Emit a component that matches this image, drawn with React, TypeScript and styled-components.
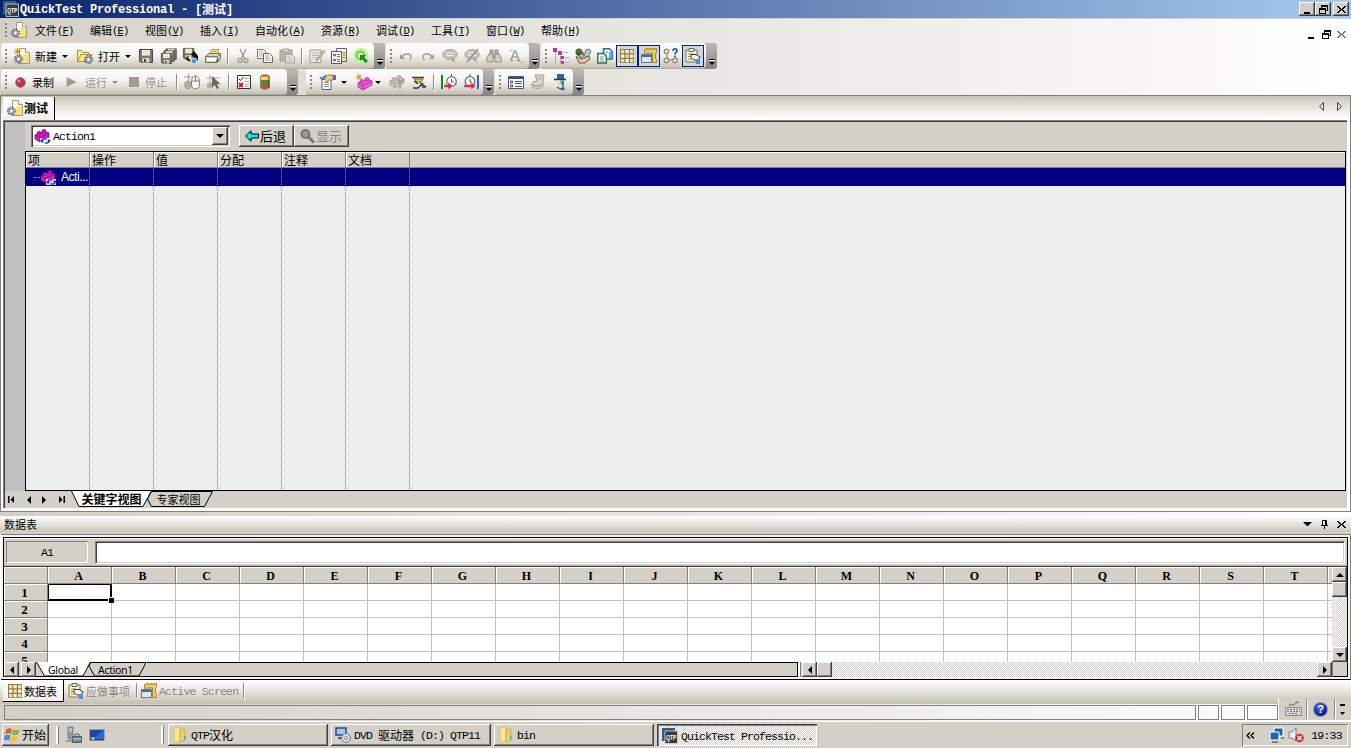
import React from 'react';
import styled, { createGlobalStyle, css } from 'styled-components';

const FACE = '#d4d0c8';
const CJK = '"Noto Sans CJK SC", sans-serif';

const Global = createGlobalStyle`
  * { box-sizing: border-box; }
  html, body { margin: 0; padding: 0; overflow: hidden; background: ${FACE}; }
  svg { display: block; flex: none; }
`;

const raised = css`
  background: ${FACE};
  box-shadow: inset -1px -1px 0 #404040, inset 1px 1px 0 #fff, inset -2px -2px 0 #808080;
`;
const checker = css`
  background: repeating-conic-gradient(#fff 0 25%, ${FACE} 0 50%) 0 0 / 2px 2px;
`;

/* ---------- text ---------- */
const Run = styled.span<{ $size: number; $bold?: boolean; $color?: string }>`
  display: inline-flex;
  align-items: center;
  flex: none;
  white-space: pre;
  height: 14px;
  line-height: 14px;
  font-family: ${CJK};
  font-size: ${p => p.$size}px;
  font-weight: ${p => (p.$bold ? 700 : 400)};
  color: ${p => p.$color || '#000'};
`;
const Latin = styled.span<{ $adv: number; $fs: number }>`
  margin-top: 2px;
  font-family: "Liberation Mono", monospace;
  font-size: ${p => p.$fs}px;
  letter-spacing: ${p => p.$adv - p.$fs * 0.6001}px;
  u { text-decoration: underline; text-underline-offset: 1px; }
`;

type TextProps = { children: string; size?: number; adv?: number; fs?: number; bold?: boolean; color?: string; accel?: string };
function Text({ children, size = 12, adv, fs, bold, color, accel }: TextProps) {
  const parts = children.match(/[\x00-\xff]+|[^\x00-\xff]+/g) || [];
  const a = adv ?? size / 2;
  const f = fs ?? size - 0.5;
  return (
    <Run $size={size} $bold={bold} $color={color}>
      {parts.map((t, i) =>
        /[\x00-\xff]/.test(t) ? <Latin key={i} $adv={a} $fs={f}>{t}</Latin> : <span key={i}>{t}</span>
      )}
      {accel && <Latin $adv={a} $fs={f}>(<u>{accel}</u>)</Latin>}
    </Run>
  );
}

/* ---------- icons ---------- */
const Svg = ({ w = 16, h = 16, children }: { w?: number; h?: number; children: React.ReactNode }) => (
  <svg width={w} height={h} viewBox={`0 0 ${w} ${h}`} fill="none" overflow="visible">{children}</svg>
);
const GREY = '#a39b91';

const Gear = ({ x, y }: { x: number; y: number }) => (
  <g transform={`translate(${x} ${y})`}>
    <circle cx="4.5" cy="4.5" r="3.8" stroke="#5a6380" strokeWidth="1.6" strokeDasharray="1.5 1.1" />
    <circle cx="4.5" cy="4.5" r="2.6" fill="#c9d1e4" stroke="#66708f" />
    <circle cx="4.5" cy="4.5" r="1" fill="#fff" />
  </g>
);
const TestIcon = ({ star }: { star?: boolean }) => (
  <Svg>
    <path d="M5.500 .5h6l4 4v11h-10z" fill="#fffbe0" stroke="#a09a80" />
    <path d="M10 6h5v9H8z" fill="#f6d860" opacity=".8" />
    <path d="M11.500 .5v4h4" fill="#fff" stroke="#a09a80" />
    {star && <path d="M3.500 0v7M0 3.500h7M1 1l5 5M6 1l-5 5" stroke="#f28c10" />}
    <Gear x={0} y={6.500} />
  </Svg>
);
const OpenIcon = () => (
  <Svg>
    <path d="M.5 13V2.500h4l1 2h6V7" fill="#fff3a8" stroke="#b08c20" />
    <path d="M.5 13.500L4 6.500h11l-3 7z" fill="#ffe680" stroke="#b08c20" />
    <Gear x={7} y={7} />
  </Svg>
);
const disk = (x: number, y: number, s: number) => (
  <g transform={`translate(${x} ${y}) scale(${s})`}>
    <path d="M.5.5h13v13H2l-1.500-1.500z" fill="#77776a" stroke="#46463c" />
    <path d="M3 1h8v5.500H3z" fill="#fff" />
    <path d="M4 2.500h6M4 4.500h6" stroke="#d8d080" />
    <path d="M3.500 9h7v4.500h-7z" fill="#d8d8d0" />
    <path d="M5 10h2v3H5z" fill="#46463c" />
  </g>
);
const SaveIcon = () => <Svg>{disk(1, 1, 1)}</Svg>;
const SaveAllIcon = () => <Svg>{disk(4.5, 0.5, .8)}{disk(2.5, 2.500, .8)}{disk(0, 5, .78)}</Svg>;
const SaveResIcon = () => (
  <Svg>{disk(0, 0, .8)}
    <path d="M8 6l3-3 4 5v5l-4-3z" fill="#1a1a1a" /><path d="M3 10l4 3M11 5l3 4" stroke="#111" strokeWidth="2" />
    <path d="M6 9l3 2" stroke="#ffe060" strokeWidth="2" /><circle cx="11" cy="13" r="3" fill="#4f9bdc" stroke="#cfe6ff" />
  </Svg>
);
const PrintIcon = () => (
  <Svg>
    <path d="M4.500 7L7 1.500h7L12 7z" fill="#fff27a" stroke="#9a9a60" /><path d="M7.500 3.500h4M7 5.500h4" stroke="#b8a830" />
    <path d="M.5 8.500L4 5.500h11.500v5l-3 4H.5z" fill="#d4d5c8" stroke="#707060" />
    <path d="M1 8.500h11.500l3-2.500M12.500 9v5" stroke="#777" /><path d="M2 11.500h9" stroke="#fff" strokeWidth="3" /><path d="M11 14l3-3" stroke="#3a9a40" strokeWidth="1.800" />
  </Svg>
);
const CutIcon = () => (
  <Svg>
    <path d="M5 1l4.500 9.500M11 1L6.500 10.500" stroke={GREY} strokeWidth="1.400" />
    <circle cx="5" cy="12.500" r="2" stroke={GREY} strokeWidth="1.300" /><circle cx="11" cy="12.500" r="2" stroke={GREY} strokeWidth="1.300" />
  </Svg>
);
const CopyIcon = () => (
  <Svg>
    <path d="M.5 1.500h6l2 2v7h-8z" fill="#fff" stroke="#77736a" /><path d="M2 4h4M2 6h4M2 8h4" stroke="#aaa59c" />
    <path d="M6.500 5.500h6l3 3v6h-9z" fill="#fff" stroke="#66645c" /><path d="M8 8h4M8 10h6M8 12h6" stroke="#8b98a8" /><path d="M11 9h4v5h-3z" fill="#f6e48a" opacity=".6" />
  </Svg>
);
const PasteIcon = () => (
  <Svg>
    <path d="M1 2h12v11H1z" fill="#bdb5aa" stroke={GREY} /><path d="M4 1h6v3H4z" fill="#ddd7cf" stroke={GREY} />
    <path d="M6.500 6.500h6l3 3v5.500h-9z" fill="#eeeae6" stroke={GREY} /><path d="M8 9h4M8 11h6M8 13h6" stroke="#bdb5aa" />
  </Svg>
);
const EditIcon = () => (
  <Svg>
    <path d="M1 2h11v12.500H1z" fill="#ece8e4" stroke={GREY} /><path d="M3 5h7M3 7.500h6M3 10h4" stroke="#b9b1a7" />
    <path d="M14.500 2L8 10l-1 3 2.500-1.500L16 3.500z" fill="#c7bfb4" stroke={GREY} />
  </Svg>
);
const SheetsIcon = () => (
  <Svg>
    <path d="M5.500 .5h10v13h-10z" fill="#fff" stroke="#66665c" /><path d="M10 4h5v9h-5z" fill="#f8e48a" />
    <path d="M.5 3.500h10v12H.5z" fill="#fff" stroke="#55554c" />
    <path d="M2 7h3M2 12h3" stroke="#6a7a98" strokeWidth="2.500" /><path d="M6 6.500h3M6 8.500h3M6 11.500h3M6 13.500h3M12 4.500h2M12 7h2M12 9.500h2" stroke="#70706a" />
  </Svg>
);
const QcIcon = () => (
  <Svg>
    <circle cx="8" cy="8" r="6.800" fill="#f2ffd8" stroke="#b6f48c" strokeWidth="1.800" />
    <circle cx="7.500" cy="7.500" r="4" stroke="#5ccc3a" strokeWidth="2" /><circle cx="7.500" cy="7.500" r="1.500" fill="#f5f04a" />
    <path d="M7 7h6l-2 2 4 4-2.200 2.200-4-4-1.800 2z" fill="#14931c" />
  </Svg>
);
const UndoIcon = ({ flip }: { flip?: boolean }) => (
  <Svg><g transform={flip ? 'translate(16 0) scale(-1 1)' : undefined}>
    <path d="M2 6v5h5z" fill={GREY} /><path d="M4 9c2-4 9-4 9 0 0 1-.5 2-1.500 3" stroke={GREY} strokeWidth="1.300" />
  </g></Svg>
);
const CommentIcon = ({ cross }: { cross?: boolean }) => (
  <Svg>
    <ellipse cx="8" cy="6.500" rx="7.300" ry="5" fill="#c8c0b7" stroke="#b3aaa0" /><path d="M8 11l5 4-1-5z" fill="#aaa196" />
    <path d="M4 5h8M4 7.500h8" stroke="#f3efeb" />{cross && <path d="M14 1L3 14" stroke="#958d83" strokeWidth="1.600" />}
  </Svg>
);
const BinocIcon = () => (
  <Svg>
    <path d="M4 2h3v4H4zM9 2h3v4H9z" fill="#bdb5ab" stroke="#968e84" /><path d="M3 6h4l0 8H.800V10zM13 6H9v8h6.200V10z" fill="#d5cec6" stroke="#968e84" /><path d="M7 7h2v3H7z" fill="#968e84" />
  </Svg>
);
const ReplaceIcon = () => (
  <Svg>
    <path d="M3 12L6.500 3h1L11 12M4.500 9h5M2 12.500h3M9 12.500h3" stroke="#948c82" strokeWidth="1.200" />
    <path d="M1 4l2-2 2 0M11 13l3 2 2-2" stroke="#b5ada3" />
  </Svg>
);
const TreeIcon = () => (
  <Svg>
    <path d="M2.500 4v11M5 3.500h1M7.500 6v9M7.500 9.500h2M7.500 14.500h2" stroke="#707c88" strokeDasharray="1 1" /><path d="M0 0h4v4H0zM5 3h4v4H5zM8 8h3v3H8zM8 13h3v3H8z" fill="#b8389c" />
    <path d="M10 4.500h5M12 9.500h4M12 14.500h4" stroke="#b0b6b8" />
  </Svg>
);
const HandIcon = () => (
  <Svg>
    <circle cx="4" cy="4" r="3.500" fill="#386c30" /><circle cx="5" cy="3" r="1.300" fill="#e04030" /><path d="M9 7l2-5 3-1 2 2-4 8z" fill="#a5cbee" stroke="#5a7aa0" /><path d="M12 3l2 2" stroke="#f0d040" strokeWidth="1.500" />
    <path d="M1 8l5 3 8-3 1 3-5 4H4z" fill="#e2c2a0" stroke="#6c5544" /><path d="M2 6l5 4M8 4v5" stroke="#222" />
  </Svg>
);
const PagesIcon = () => (
  <Svg>
    <path d="M6.500 .800h6l2.700 2.700v7.500H6.500z" fill="#fff" stroke="#246cb4" strokeWidth="1.500" /><path d="M12 4h3v6h-3z" fill="#6aa9e4" /><path d="M8 4h3" stroke="#4f93d6" />
    <path d="M.800 5.500h6l2.500 2.500v7H.800z" fill="#fff" stroke="#27794a" strokeWidth="1.500" /><path d="M3 9h4M3 11h4M3 13h4" stroke="#57a878" />
  </Svg>
);
const GridIcon = () => (
  <Svg>
    <path d="M1 1h14v14H1z" fill="#7d7d70" />
    {[0, 1, 2].map(r => [0, 1, 2].map(c => <rect key={`${r}${c}`} x={2 + c * 4.500} y={2 + r * 4.500} width="3.300" height="3.300" fill={(r + c) % 2 ? '#fff6c8' : '#ffe06a'} />))}
  </Svg>
);
const ScreenIcon = () => (
  <Svg>
    <path d="M3.500 1.500h2v-1h2v1h2v-1h2v1h2v-1h2v4l-1 1v5l1 1v3h-4V5H5.500v2h-2z" fill="#f5d04a" stroke="#8a7030" strokeWidth=".8" />
    <path d="M.5 6.500h10v8H.5z" fill="#dfe6f0" stroke="#6a7890" /><path d="M1 7h9v2H1z" fill="#3f6cac" />
  </Svg>
);
const NodesIcon = () => (
  <Svg>
    <path d="M4 4v8h8V9" stroke="#7d7d6d" />{[[3.500, 3.500], [3.500, 12.500], [12, 12.500]].map(([x, y]) => <circle key={`${x}-${y}`} cx={x} cy={y} r="2.400" fill="#e0e0ce" stroke="#6d6d5a" />)}
    <path d="M10 3c0-3 4-3 4 0 0 1.500-2 1.500-2 3.500M12 7.500v1.500" stroke="#1c5d9e" strokeWidth="1.700" />
  </Svg>
);
const TodoIcon = () => (
  <Svg>
    <path d="M1 2h11v12H1z" fill="#fff8b8" stroke="#77705a" /><path d="M4 .5h5v3H4z" fill="#eee" stroke="#666" /><path d="M3 6h5M3 8.500h3M3 11h4" stroke="#8a866c" />
    <path d="M6 6.500h5l4 2.500-2 3H9L6 9.500z" fill="#fff" stroke="#333" /><path d="M11 11.500h4v4.500h-4z" fill="#4a90dc" />
  </Svg>
);
const RecordIcon = () => <Svg w={11} h={11}><circle cx="5.500" cy="5.500" r="4.700" fill="#c63550" stroke="#8b4856" /><circle cx="4" cy="4" r="1.500" fill="#e58a94" /></Svg>;
const PlayIcon = () => <Svg w={11} h={10}><path d="M.5 0L10.500 5 .5 10z" fill={GREY} /></Svg>;
const StopIcon = () => <Svg w={10} h={10}><path d="M0 0h10v10H0z" fill={GREY} /></Svg>;
const MouseIcon = () => (
  <Svg>
    <path d="M0 3h9M4.500 0v9" stroke="#a8a097" strokeWidth="1.200" /><ellipse cx="4" cy="11" rx="3.500" ry="4" fill="#b5ada3" stroke="#a8a097" />
    <path d="M7.500 8c0-8 8-8 8 0v3c0 5-8 5-8 0z" fill="#f6f4f1" stroke="#857d74" /><path d="M7.500 7h8M11.500 2v5" stroke="#857d74" />
  </Svg>
);
const PointerIcon = () => (
  <Svg>
    <path d="M0 4h14M4 1v9" stroke="#b4ada4" strokeWidth="1.200" /><ellipse cx="4" cy="11.500" rx="3.200" ry="3" fill="#b5ada3" />
    <path d="M6 2l8.500 8H11l2 4-2.200 1-2-4L6 13.500z" fill="#6f6760" />
  </Svg>
);
const CheckListIcon = () => (
  <Svg>
    <path d="M1.500 1.500h13v13h-13z" fill="#fff" stroke="#333" /><path d="M3 5l1.500 1.500L7.500 3" stroke="#222" /><path d="M3 9l4 4M7 9l-4 4" stroke="#d01030" strokeWidth="1.800" />
    <path d="M9.500 4.500h4M9.500 7.500h4M9.500 10.500h4M9.500 12.500h4" stroke="#555" strokeDasharray="1 1" />
  </Svg>
);
const LightIcon = () => (
  <Svg>
    <path d="M3.500 3c0-3 9-3 9 0v10c0 3-9 3-9 0z" fill="#c84848" stroke="#857850" strokeWidth=".8" /><path d="M4 2.500h8V6H4z" fill="#f0dc50" /><path d="M4 7h8v3.500H4z" fill="#20a838" /><path d="M10.500 2h2v12h-2z" fill="#502020" opacity=".3" />
  </Svg>
);
const StepIcon = () => (
  <Svg>
    <path d="M2 5.500h9v10H2z" fill="#fff" stroke="#55606c" /><path d="M4 8.500h5M4 10.500h5M4 12.500h5" stroke="#7d8a98" /><path d="M0 3l2 2 4-4" stroke="#2a72c0" strokeWidth="1.600" />
    <path d="M5 4l3-3h5v5H9l-2 2-2-2z" fill="#f3cf78" stroke="#94652a" strokeWidth=".8" /><path d="M13 1h3v5h-3z" fill="#3f74c0" />
  </Svg>
);
const BrickIcon = ({ grey, star, cycle }: { grey?: boolean; star?: boolean; cycle?: boolean }) => {
  const f = grey ? '#cdc5bb' : star ? '#ec5cd8' : '#dc1cc0';
  const d = grey ? '#9d958b' : star ? '#a02c90' : '#760a68';
  return (
    <Svg>
      {star && <path d="M3 0v6M0 3h6M1 1l4 4M5 1L1 5" stroke="#f08c10" />}
      <g transform={star ? 'translate(1 2)' : undefined}>
        <path d="M1 7l9-4 5 2v4l-9 5-5-3z" fill={f} stroke={d} strokeWidth=".8" /><path d="M1 7l5 2.500 9-4.500M6 9.500V14" stroke={d} strokeWidth=".8" />
        <ellipse cx="5" cy="5" rx="2" ry="1.500" fill={f} stroke={d} strokeWidth=".8" /><ellipse cx="10" cy="3" rx="2" ry="1.500" fill={f} stroke={d} strokeWidth=".8" />
      </g>
      {grey && <path d="M9 5l2 4 4-4M11 9v6" stroke={d} strokeWidth="1.500" />}
      {cycle && <g><path d="M6 10h10v6H6z" fill="#fff" opacity=".85" /><path d="M8 14v-1.500c0-2 3-2.500 4.500-1M15 12v1c0 2.500-3 2.500-4.500 1.500" stroke="#1226e0" strokeWidth="1.400" /><path d="M5.800 12.500h4.400L8 15zM12.800 13.500h4.200l-2-2.500z" fill="#1226e0" /></g>}
    </Svg>
  );
};
const TableFnIcon = () => <Svg><path d="M1 3.500h12M2 14h5l5-5M3 7l4 3M9 9l6 4M11 13h4" stroke="#3d3d34" strokeWidth="1.400" /><path d="M3 5h9l-2 3H6z" fill="#f2d14c" stroke="#4a4a3c" strokeWidth=".8" /></Svg>;
const TimerIcon = ({ end }: { end?: boolean }) => (
  <Svg>
    {end ? <path d="M14 1h2v14h-2z" fill="#2a62cc" /> : <path d="M0 1h2v14H0z" fill="#128a12" />}
    <circle cx={end ? 7 : 10.500} cy="7.500" r="4.800" fill="#fff" stroke="#6e6e6e" strokeWidth="1.300" /><path d={end ? 'M7 0v2M7 5v3h2' : 'M10.500 0v2M10.500 5v3h2'} stroke="#444" />
    <path d={end ? 'M1 10.500h7v-2.500l5 4-5 4v-2.500H1z' : 'M3 10.500h4v-2.500l5 4-5 4v-2.500H3z'} fill="#d22c48" stroke="#fff" strokeWidth=".4" />
  </Svg>
);
const FormIcon = () => (
  <Svg><path d="M.5 2.500h15v12H.5z" fill="#fff" stroke="#48566c" /><path d="M1 3h14v2H1z" fill="#27508c" /><path d="M2.500 7h2v2h-2zM2.500 11h2v2h-2z" stroke="#48566c" /><path d="M7 7.500h7M7 9.500h7M7 12.500h7" stroke="#48566c" /></Svg>
);
const BooksIcon = () => <Svg><path d="M5 1h9l-1 8-5 3-6-1 1-3 4-1z" fill="#dcd5cd" stroke="#a8a096" /><path d="M1 11l7 2 6-3M1 13l7 2 6-3" stroke="#a8a096" /><path d="M6 4l6-1M6 6l6-1" stroke="#b8b0a6" /></Svg>;
const WizardIcon = () => (
  <Svg><path d="M5 0h7v5H5z" fill="#2a68a8" /><path d="M2 5.500h12" stroke="#173c70" strokeWidth="1.600" /><path d="M5 6.500h7v6H5z" fill="#f4deb0" /><path d="M8.500 6.500H12v6H9z" fill="#4d7cb8" /><path d="M4 13h8l1 3H9z" fill="#2a62b0" /><path d="M7 10h3v4H7z" fill="#f4e070" /></Svg>
);
const QtpIcon = () => (
  <Svg>
    <path d="M0 0h13v13H0z" fill="#2c6090" /><path d="M3 3h12.500v12.500H3z" fill="#3c3c3c" stroke="#ddd" strokeWidth=".8" />
    <text x="9.300" y="12" fontSize="7" fontWeight="700" textAnchor="middle" textLength="10" lengthAdjust="spacingAndGlyphs" fill="#fff" fontFamily="Liberation Sans, sans-serif">QTP</text>
  </Svg>
);
const FolderIcon = () => <Svg><path d="M2 1l6-1v14l-6 2z" fill="#f6e69a" stroke="#d8bc50" strokeWidth=".7" /><path d="M8 2h5v11l-5 2z" fill="#ecd062" stroke="#c9a53c" strokeWidth=".7" /><path d="M12 9h1.500v4H12z" fill="#4aa8e0" /></Svg>;
const DvdIcon = () => (
  <Svg><path d="M1 1h10v7H1z" fill="#9fcaf0" stroke="#2c4a78" strokeWidth="1.500" /><path d="M3 10h4v2H3z" fill="#3d5c88" /><circle cx="11" cy="11" r="4.500" fill="#d8d8dc" stroke="#77777c" /><circle cx="11" cy="11" r="1.500" fill="#fff" stroke="#888" /></Svg>
);
const FlagIcon = () => (
  <Svg><path d="M2.500 2.500c2-1.500 4-1.500 5.500-.5L6.500 7C5 6 3 6 1 7z" fill="#e8542c" /><path d="M9 2.500c2 1 4 1 6.500 0L14 7.500c-2 1-4 1-6.500 0z" fill="#86b83a" /><path d="M.8 8.500c2-1 4-1 5.500 0L5 13.500c-2-1-3.500-1-5 0z" fill="#3f8ad8" /><path d="M7.200 9c2 1 4 1 6.500 0l-1.500 5c-2 1-4.500 1-6.500 0z" fill="#f5c030" /></Svg>
);
const ServerIcon = () => <Svg><path d="M2 0h5v12H2z" fill="#8a9ba6" stroke="#63747e" strokeWidth=".7" /><path d="M3 2h3M3 4h3" stroke="#dfe8ec" /><path d="M0 13h8v2H0z" fill="#90a0a8" /><path d="M6.500 9.500h9v6h-9z" fill="#73848f" stroke="#4e5c66" /><path d="M9 9V7h4v2" stroke="#4e5c66" /><path d="M7 12h8" stroke="#cdd5d9" /></Svg>;
const DesktopIcon = () => <Svg><path d="M.5 2.500h15v10H.5z" fill="#2a6cd4" stroke="#8da4c0" /><path d="M1 3h14L6 10H1z" fill="#1b48a4" /><path d="M1 12h14v1.500H1z" fill="#27405c" /><circle cx="4" cy="11.500" r="1.500" fill="#e8c060" /></Svg>;

const Glyph = ({ kind, color = '#000' }: { kind: 'min' | 'restore' | 'close'; color?: string }) => (
  <svg width="9" height="9" viewBox="0 0 9 9" fill="none" shapeRendering="crispEdges">
    {kind === 'min' && <path d="M1 7h6v2H1z" fill={color} />}
    {kind === 'restore' && <path d="M2.500 3V.5h6v5H6M2 1.500h7M.5 3.500h5.500v5H.5zM0 4.500h6" stroke={color} />}
    {kind === 'close' && <path d="M0 1h2v1h1v1h1v1h1V3h1V2h1V1h2v1H8v1H7v1H6v1h1v1h1v1h1v1H7V7H6V6H5V5H4v1H3v1H2v1H0V7h1V6h1V5h1V4H2V3H1V2H0z" fill={color} />}
  </svg>
);
const Tri = ({ dir, color = '#000', s = 4 }: { dir: 'u' | 'd' | 'l' | 'r'; color?: string; s?: number }) => {
  const vertical = dir === 'u' || dir === 'd';
  const w = vertical ? s * 2 : s, h = vertical ? s : s * 2;
  const d = { u: `M0 ${h}h${w}L${w / 2} 0z`, d: `M0 0h${w}L${w / 2} ${h}z`, l: `M${w} 0v${h}L0 ${h / 2}z`, r: `M0 0v${h}L${w} ${h / 2}z` }[dir];
  return <svg width={w} height={h}><path d={d} fill={color} /></svg>;
};

/* ---------- top chrome ---------- */
const Desktop = styled.div`
  width: 1351px; height: 748px; display: flex; flex-direction: column; background: ${FACE}; overflow: hidden;
`;
const TitleBar = styled.header`
  height: 19px; flex: none; display: flex; align-items: center; padding: 0 2px 0 3px;
  background: linear-gradient(90deg, #0a246a, #a6caf0); border-bottom: 1px solid ${FACE};
`;
const TitleText = styled.div`display: flex; padding-left: 1px; height: 14px;`;
const Spacer = styled.div`flex: 1;`;
const CaptionButton = styled.div<{ $gap?: number }>`
  ${raised}
  width: 16px; height: 14px; margin-left: ${p => p.$gap || 0}px; display: flex; align-items: center; justify-content: center;
`;
const Chrome = styled.div`
  height: 76px; flex: none; background: linear-gradient(90deg, #d4d0c8 0, #e0ddd6 20%, #e8e7e3 52%, #f8f7f5 85%, #fff 100%);
`;
const MenuBar = styled.nav`height: 24px; display: flex; align-items: center; padding: 0 5px 2px 5px;`;
const MenuList = styled.div`display: flex; padding-left: 8px; height: 14px;`;
const MenuItem = styled.div<{ $w: number }>`width: ${p => p.$w}px; flex: none; display: flex;`;
const MdiButtons = styled.div`display: flex; gap: 6px; padding-top: 9px;`;
const Grip = styled.i<{ $ml?: number }>`
  width: 3px; height: 14px; flex: none; margin-left: ${p => p.$ml || 0}px;
  background: repeating-linear-gradient(180deg, #8c8880 0 2px, transparent 2px 4px) 0 0 / 2px 100% no-repeat;
`;
const ToolRow = styled.div`height: 26px; display: flex; padding-left: 1px;`;
const BarShell = styled.div<{ $w: number; $ml?: number }>`
  width: ${p => p.$w}px; margin-left: ${p => p.$ml || 0}px; height: 26px; flex: none; display: flex;
  border-radius: 3px; background: linear-gradient(180deg, #bcbab5, #858585);
`;
const BarBody = styled.div`
  flex: 1; min-width: 0; display: flex; align-items: center; border-radius: 3px 4px 4px 3px;
  background: linear-gradient(180deg, #fdfdfc 0, #f4f3f0 45%, #dcd8d0 75%, #c5c0b4 96%, #9c988e 100%);
`;
const BarCap = styled.div`width: 11px; display: flex; flex-direction: column; align-items: center; justify-content: flex-end; padding-bottom: 4px; gap: 1px;`;
const CapLine = styled.i`width: 6px; height: 2px; background: linear-gradient(#000 50%, #fff 50%);`;
const Slot = styled.div<{ $ml: number; $w?: number }>`
  width: ${p => p.$w || 16}px; margin-left: ${p => p.$ml}px; flex: none; display: flex; align-items: center; justify-content: center;
`;
const Pressed = styled.div<{ $ml?: number }>`
  width: 22px; height: 22px; margin-left: ${p => p.$ml || 0}px; flex: none; display: flex; align-items: center; justify-content: center;
  background: #d2d5de; border: 1px solid #0a246a;
`;
const Divider = styled.i<{ $ml: number; $h?: number; $mt?: number }>`
  width: 1px; height: ${p => p.$h || 16}px; margin: ${p => p.$mt || 0}px 0 0 ${p => p.$ml}px; flex: none; background: #8f8b83; box-shadow: 1px 1px 0 #fff;
`;
const Bar = ({ w, ml, children }: { w: number; ml?: number; children: React.ReactNode }) => (
  <BarShell $w={w} $ml={ml}>
    <BarBody><Grip $ml={4} />{children}</BarBody>
    <BarCap><CapLine /><Tri dir="d" s={3} /></BarCap>
  </BarShell>
);
const Drop = ({ ml, color }: { ml: number; color?: string }) => <Slot $ml={ml} $w={6}><Tri dir="d" s={3} color={color} /></Slot>;

const menus: [string, string, number][] = [
  ['文件', 'F', 55], ['编辑', 'E', 55], ['视图', 'V', 55], ['插入', 'I', 55], ['自动化', 'A', 66],
  ['资源', 'R', 55], ['调试', 'D', 55], ['工具', 'T', 55], ['窗口', 'W', 55], ['帮助', 'H', 55],
];

/* ---------- document ---------- */
const DocFrame = styled.section`
  height: 417px; flex: none; display: flex; flex-direction: column; background: #fff;
  border: 1px solid #808080;
`;
const TabStrip = styled.div`
  height: 24px; flex: none; display: flex; align-items: center; padding: 0 8px 0 2px;
  background: linear-gradient(180deg, #c9c5ba 0, #e6e4df 45%, #fff 95%);
`;
const DocTab = styled.div`
  width: 52px; height: 23px; display: flex; align-items: center; padding: 0 0 1px 4px; gap: 1px;
  background: linear-gradient(180deg, #fff, #f1efe8); border-right: 1px solid #000; margin-top: 1px;
`;
const TabNav = styled.div`display: flex; gap: 13px; margin-bottom: 3px;`;
const Pane = styled.div`
  flex: 1; margin: 0 3px 3px 2px; display: flex; flex-direction: column; background: ${FACE};
  border: solid #808080; border-width: 1px 0 0 1px; box-shadow: inset 1px 1px 0 #404040; padding: 1px 1px 0 1px;
`;
const PaneMain = styled.div`height: 369px; flex: none; display: flex;`;
const Gutter = styled.div`width: 20px; flex: none; background: #c0c0c0;`;
const PaneBody = styled.div`flex: 1; display: flex; flex-direction: column;`;
const ActionBar = styled.div`height: 29px; flex: none; display: flex; align-items: center; padding: 0 0 1px 6px;`;
const Combo = styled.div`
  width: 199px; height: 22px; background: #fff; display: flex; align-items: center; padding: 2px 2px 2px 3px; gap: 3px; margin-right: 9px;
  box-shadow: inset 1px 1px 0 #808080, inset 2px 2px 0 #404040, inset -1px -1px 0 #fff, inset -2px -2px 0 ${FACE};
`;
const ComboButton = styled.div`${raised} width: 16px; height: 18px; margin-left: auto; display: flex; align-items: center; justify-content: center;`;
const PushButton = styled.div`
  ${raised} width: 55px; height: 22px; display: flex; align-items: center; padding-left: 6px; gap: 1px;
`;
const Keyword = styled.div`flex: 1; border: 1px solid #000; background: #eee; display: flex; flex-direction: column;`;
const KeyHead = styled.div`height: 16px; flex: none; display: flex; background: ${FACE}; border-bottom: 1px solid #808080; box-shadow: inset 0 1px 0 #fff;`;
const KeyHeadCell = styled.div`
  width: 64px; flex: none; display: flex; align-items: center; padding-left: 2px; border-right: 1px solid #808080; box-shadow: inset 1px 1px 0 #fff;
`;
const KeyColumn = styled.div`
  width: 64px; flex: none; background: repeating-linear-gradient(180deg, #888 0 1px, transparent 1px 2px) 100% 0 / 1px 100% no-repeat;
`;
const KeyRow = styled.div`height: 18px; flex: none; display: flex; background: #000080;`;
const KeyRowCell = styled(KeyColumn)`display: flex; align-items: center; padding-left: 8px; overflow: hidden;`;
const Dots = styled.i`width: 6px; flex: none; border-top: 1px dotted #aaa;`;
const RowName = styled.span`font: 12px/14px "Liberation Sans", sans-serif; color: #fff; padding-left: 5px; letter-spacing: -.45px;`;
const KeyBlank = styled.div`flex: 1; display: flex;`;
const ViewTabs = styled.div`height: 17px; flex: none; display: flex; align-items: center;`;
const NavGlyphs = styled.div`display: flex; width: 66px; padding: 0 6px 0 3px; justify-content: space-between; align-items: center;`;
const ShapeTab = styled.div<{ $w: number; $h: number; $ml?: number; $pb?: number; $pr?: number }>`
  position: relative; width: ${p => p.$w}px; height: ${p => p.$h}px; margin-left: ${p => p.$ml || 0}px; flex: none;
  padding: 0 ${p => p.$pr || 0}px ${p => p.$pb || 0}px 0;
  display: flex; align-items: center; justify-content: center;
  > svg { position: absolute; inset: 0; }
  > span { position: relative; }
`;

/* ---------- data table ---------- */
const Gap = styled.div`height: 4px; flex: none; background: linear-gradient(90deg, #d4d0c8, #fff);`;
const PanelHead = styled.div`
  height: 16px; flex: none; display: flex; align-items: center; padding: 0 5px 0 4px; gap: 9px;
  background: linear-gradient(180deg, #fff 0, #e6e4df 50%, #cbc7bc 100%);
`;
const PanelFrame = styled.section`
  height: 148px; flex: none; border-top: 2px solid ${FACE}; display: flex; padding: 0 0 0 1px; background: #fff;
`;
const PanelInner = styled.div`
  flex: 1; min-width: 0; display: flex; border: solid #808080; border-width: 1px 1px 0 0; padding: 2px; background: #f4f3f0; border-bottom: 1px solid #000;
`;
const Sheet = styled.div`flex: 1; min-width: 0; display: flex; flex-direction: column; border: 1px solid #000; background: ${FACE};`;
const FormulaBar = styled.div`
  height: 29px; flex: none; display: flex; align-items: center; padding: 1px 3px 1px 2px; gap: 7px; border-bottom: 1px solid #404040;
  box-shadow: inset 0 1px 0 #fff, inset 0 -1px 0 #b8b4ac;
`;
const NameBox = styled.div`
  width: 82px; height: 22px; flex: none; display: flex; align-items: center; justify-content: center;
  box-shadow: inset 1px 1px 0 #808080, inset -1px -1px 0 #fff;
`;
const Formula = styled.div`
  flex: 1; height: 22px; background: #fff; box-shadow: inset 1px 1px 0 #808080, inset 2px 2px 0 #404040, inset -1px -1px 0 ${FACE}, 1px 1px 0 #fff;
`;
const SheetMain = styled.div`height: 95px; flex: none; display: flex;`;
const SheetGrid = styled.div`flex: 1; min-width: 0; overflow: hidden; background: #fff;`;
const SheetRow = styled.div`height: 17px; display: flex;`;
const HeadCell = styled.div<{ $w: number }>`
  width: ${p => p.$w}px; flex: none; display: flex; align-items: center; justify-content: center;
  font: bold 12px/14px "Liberation Serif", serif; background: ${FACE}; border: solid #808080; border-width: 0 1px 1px 0; box-shadow: inset 1px 1px 0 #fff;
  padding: 1px 2px 0 0;
`;
const RowNumber = styled(HeadCell)`font-size: 13px;`;
const Cell = styled.div`position: relative; width: 64px; flex: none; border: solid #c0c0c0; border-width: 0 1px 1px 0;`;
const Cursor = styled.div`
  position: absolute; left: 0; top: 0; width: 64px; height: 17px; border: solid #000; border-width: 1px 2px 2px 1px; z-index: 1;
  &::after { content: ''; position: absolute; right: -4px; bottom: -4px; width: 5px; height: 5px; background: #000; border: solid #fff; border-width: 1px 0 0 1px; }
`;
const VScroll = styled.div`width: 15px; flex: none; display: flex; flex-direction: column; ${checker}`;
const ScrollButton = styled.div`${raised} width: 15px; height: 15px; flex: none; display: flex; align-items: center; justify-content: center;`;
const SheetFoot = styled.div`height: 15px; flex: none; display: flex;`;
const FootTabs = styled.div`width: 794px; flex: none; display: flex; gap: 2px; border-right: 1px solid #000;`;
const FootFill = styled.div`flex: 1; margin-left: -3px; border-top: 1px solid #000;`;
const SheetTabText = styled.span`font: 10.500px/13px "Noto Sans", sans-serif; letter-spacing: -.3px; top: 1px;`;
const Splitter = styled.div`width: 4px; flex: none; background: linear-gradient(90deg, #fff 50%, #808080 50% 75%, ${FACE} 75%);`;
const HTrack = styled.div`flex: 1; ${checker}`;
const Corner = styled.div`width: 15px; flex: none; border: solid #808080; border-width: 0 0 0 1px;`;

/* ---------- bottom ---------- */
const DockTabs = styled.div`
  height: 24px; flex: none; display: flex; align-items: flex-start; padding-left: 3px;
  background: linear-gradient(180deg, #fff 0, #e8e6e0 45%, #c8c3b7 95%);
`;
const DockTab = styled.div<{ $w: number; $on?: boolean; $gap?: number }>`
  width: ${p => p.$w}px; height: 22px; flex: none; display: flex; align-items: center; gap: ${p => p.$gap ?? 2}px; padding-left: 4px;
  ${p => p.$on && css`background: linear-gradient(180deg, #fff, #f1efe8); border: solid #000; border-width: 0 1px 1px 0;`}
`;
const StatusBar = styled.footer`
  position: relative; height: 17px; flex: none; display: flex; gap: 2px; padding: 1px 74px 0 4px;
  background: linear-gradient(90deg, #d4d0c8, #e9e8e4 52%, #fff);
`;
const StatusCell = styled.div<{ $w: number }>`width: ${p => p.$w}px; height: 15px; flex: none; border: 1px solid #808080;`;
const LangBar = styled.div`
  position: absolute; right: 0; top: -6px; width: 73px; height: 22px; background: ${FACE}; display: flex; align-items: center; padding-left: 6px; border-left: 1px solid #fff;
`;
const HelpDot = styled.div`
  width: 15px; height: 15px; border-radius: 50%; background: radial-gradient(circle at 40% 30%, #4a6cf0, #0a1ea0 70%); border: 1px solid #8a8a9a;
  color: #fff; font: bold 11px/13px "Liberation Sans", sans-serif; text-align: center;
`;
const TaskBar = styled.footer`
  height: 27px; flex: none; display: flex; align-items: center; border-top: 1px solid #fff; padding: 0 3px 0 2px;
`;
const StartButton = styled.div`${raised} width: 47px; height: 22px; flex: none; display: flex; align-items: center; gap: 2px; padding: 0 0 1px 2px;`;
const TaskButton = styled.div<{ $on?: boolean; $ml?: number }>`
  width: 160px; height: 22px; flex: none; margin-left: ${p => p.$ml ?? 3}px; display: flex; align-items: center; gap: 3px; padding-left: 4px;
  ${p => p.$on ? css`${checker} padding-top: 2px; padding-left: 5px; box-shadow: inset 1px 1px 0 #404040, inset 2px 2px 0 #808080, inset -1px -1px 0 #fff;` : raised}
`;
const Rail = styled.i<{ $ml: number }>`width: 3px; height: 18px; margin-left: ${p => p.$ml}px; flex: none; background: #fff; border-right: 1px solid #808080;`;
const Tray = styled.div`
  width: 106px; height: 22px; margin-left: auto; display: flex; align-items: center; padding-left: 4px; gap: 3px;
  box-shadow: inset 1px 1px 0 #808080, inset -1px -1px 0 #fff;
`;

const letters = 'ABCDEFGHIJKLMNOPQRST'.split('');

export default function App() {
  return (
    <Desktop>
      <Global />
      <TitleBar>
        <QtpIcon />
        <TitleText><Text size={12} adv={7} fs={12} bold color="#fff">QuickTest Professional - [测试]</Text></TitleText>
        <Spacer />
        <CaptionButton><Glyph kind="min" /></CaptionButton>
        <CaptionButton><Glyph kind="restore" /></CaptionButton>
        <CaptionButton $gap={2}><Glyph kind="close" /></CaptionButton>
      </TitleBar>

      <Chrome>
        <MenuBar>
          <Grip />
          <Slot $ml={3}><TestIcon /></Slot>
          <MenuList>
            {menus.map(([t, k, w]) => <MenuItem key={k} $w={w}><Text size={11} accel={k}>{t}</Text></MenuItem>)}
          </MenuList>
          <Spacer />
          <MdiButtons><Glyph kind="min" /><Glyph kind="restore" /><Glyph kind="close" color="#777" /></MdiButtons>
        </MenuBar>
        <ToolRow>
          <Bar w={384}>
            <Slot $ml={6}><TestIcon star /></Slot>
            <Slot $ml={5} $w={22}><Text size={11}>新建</Text></Slot><Drop ml={5} />
            <Slot $ml={9}><OpenIcon /></Slot>
            <Slot $ml={5} $w={22}><Text size={11}>打开</Text></Slot><Drop ml={5} />
            <Slot $ml={7}><SaveIcon /></Slot><Slot $ml={7}><SaveAllIcon /></Slot><Slot $ml={6}><SaveResIcon /></Slot><Slot $ml={6}><PrintIcon /></Slot>
            <Divider $ml={6} />
            <Slot $ml={7}><CutIcon /></Slot><Slot $ml={6}><CopyIcon /></Slot><Slot $ml={6}><PasteIcon /></Slot>
            <Divider $ml={6} />
            <Slot $ml={7}><EditIcon /></Slot><Slot $ml={6}><SheetsIcon /></Slot><Slot $ml={6}><QcIcon /></Slot>
          </Bar>
          <Bar w={154} ml={1}>
            <Slot $ml={5}><UndoIcon /></Slot><Slot $ml={6}><UndoIcon flip /></Slot><Slot $ml={6}><CommentIcon /></Slot>
            <Slot $ml={6}><CommentIcon cross /></Slot><Slot $ml={6}><BinocIcon /></Slot><Slot $ml={6}><ReplaceIcon /></Slot>
          </Bar>
          <Bar w={176} ml={1}>
            <Slot $ml={5}><TreeIcon /></Slot><Slot $ml={6}><HandIcon /></Slot><Slot $ml={6}><PagesIcon /></Slot>
            <Pressed $ml={3}><GridIcon /></Pressed><Pressed><ScreenIcon /></Pressed>
            <Slot $ml={3}><NodesIcon /></Slot><Pressed $ml={3}><TodoIcon /></Pressed>
          </Bar>
        </ToolRow>
        <ToolRow>
          <Bar w={297}>
            <Slot $ml={7} $w={11}><RecordIcon /></Slot><Slot $ml={6} $w={22}><Text size={11}>录制</Text></Slot>
            <Slot $ml={12} $w={11}><PlayIcon /></Slot><Slot $ml={8} $w={22}><Text size={11} color="#96928a">运行</Text></Slot><Drop ml={5} color="#96928a" />
            <Slot $ml={11} $w={10}><StopIcon /></Slot><Slot $ml={6} $w={22}><Text size={11} color="#96928a">停止</Text></Slot>
            <Divider $ml={9} /><Slot $ml={7}><MouseIcon /></Slot><Slot $ml={6}><PointerIcon /></Slot>
            <Divider $ml={6} /><Slot $ml={7}><CheckListIcon /></Slot><Slot $ml={5}><LightIcon /></Slot>
          </Bar>
          <Bar w={188} ml={8}>
            <Slot $ml={7}><StepIcon /></Slot><Drop ml={5} />
            <Slot $ml={9}><BrickIcon star /></Slot><Drop ml={3} />
            <Slot $ml={8}><BrickIcon grey /></Slot><Slot $ml={6}><TableFnIcon /></Slot>
            <Divider $ml={6} /><Slot $ml={7}><TimerIcon /></Slot><Slot $ml={6}><TimerIcon end /></Slot>
          </Bar>
          <Bar w={89} ml={1}>
            <Slot $ml={6}><FormIcon /></Slot><Slot $ml={6}><BooksIcon /></Slot><Slot $ml={6}><WizardIcon /></Slot>
          </Bar>
        </ToolRow>
      </Chrome>

      <DocFrame>
        <TabStrip>
          <DocTab><TestIcon /><Text size={12} bold>测试</Text></DocTab>
          <Spacer />
          <TabNav>
            <svg width="5" height="9" fill="none"><path d="M4.500 .5v8L.5 4.500z" stroke="#444" /></svg>
            <svg width="5" height="9" fill="none"><path d="M.5 .5v8l4-4z" stroke="#444" /></svg>
          </TabNav>
        </TabStrip>
        <Pane>
          <PaneMain>
            <Gutter />
            <PaneBody>
              <ActionBar>
                <Combo><BrickIcon cycle /><Text>Action1</Text><ComboButton><Tri dir="d" /></ComboButton></Combo>
                <PushButton>
                  <svg width="14" height="12"><path d="M.5 6L6 .800V4h7.500v4H6v3.200z" fill="#00f0f0" stroke="#000" /></svg>
                  <Text size={13}>后退</Text>
                </PushButton>
                <PushButton>
                  <svg width="15" height="16" fill="none"><circle cx="5.500" cy="6" r="4" fill="#999" stroke="#777" strokeWidth="2" /><path d="M8 8.500l6 6" stroke="#777" strokeWidth="3" /></svg>
                  <Text size={13} color="#858585">显示</Text>
                </PushButton>
              </ActionBar>
              <Keyword>
                <KeyHead>{['项', '操作', '值', '分配', '注释', '文档'].map(t => <KeyHeadCell key={t}><Text>{t}</Text></KeyHeadCell>)}</KeyHead>
                <KeyRow>
                  <KeyRowCell><Dots /><BrickIcon cycle /><RowName>Acti...</RowName></KeyRowCell>
                  {[1, 2, 3, 4, 5].map(i => <KeyRowCell key={i} />)}
                </KeyRow>
                <KeyBlank>{[0, 1, 2, 3, 4, 5].map(i => <KeyColumn key={i} />)}</KeyBlank>
              </Keyword>
            </PaneBody>
          </PaneMain>
          <ViewTabs>
            <NavGlyphs>
              <svg width="7" height="7"><path d="M0 0h1.500v7H0zM6 0v7L2.500 3.500z" /></svg>
              <Tri dir="l" /><Tri dir="r" />
              <svg width="7" height="7"><path d="M5.500 0H7v7H5.500zM1 0v7l3.500-3.500z" /></svg>
            </NavGlyphs>
            <ShapeTab $w={81} $h={17} $pb={2}>
              <svg width="81" height="17"><path d="M.5 0l7.500 15.500h64L80.500 0z" fill="#fff" /><path d="M.5 0l7.500 15.500h64L80.500 0" fill="none" stroke="#000" /></svg>
              <Text size={12} bold>关键字视图</Text>
            </ShapeTab>
            <ShapeTab $w={66} $h={17} $ml={-5} $pb={2} $pr={3}>
              <svg width="66" height="17"><path d="M4.500 0.500L.5 8l4 7.500h53L65.500 .5z" fill={FACE} stroke="#000" /></svg>
              <Text size={11}>专家视图</Text>
            </ShapeTab>
          </ViewTabs>
        </Pane>
      </DocFrame>

      <Gap />
      <PanelHead>
        <Text size={11}>数据表</Text>
        <Spacer />
        <Tri dir="d" s={4.500} />
        <svg width="7" height="9" fill="none"><path d="M1.500 5V.5h4V5M4.500 .5V5M0 5.500h7M3.500 6v3" stroke="#000" /></svg>
        <Glyph kind="close" />
      </PanelHead>
      <PanelFrame>
        <PanelInner>
          <Sheet>
            <FormulaBar><NameBox><Text>A1</Text></NameBox><Formula /></FormulaBar>
            <SheetMain>
              <SheetGrid>
                <SheetRow><HeadCell $w={44} />{letters.map(l => <HeadCell key={l} $w={64}>{l}</HeadCell>)}<HeadCell $w={64} /></SheetRow>
                {[1, 2, 3, 4, 5].map(n => (
                  <SheetRow key={n}>
                    <RowNumber $w={44}>{n}</RowNumber>
                    {letters.map(l => <Cell key={l}>{n === 1 && l === 'A' && <Cursor />}</Cell>)}
                    <Cell />
                  </SheetRow>
                ))}
              </SheetGrid>
              <VScroll>
                <ScrollButton><Tri dir="u" /></ScrollButton><ScrollButton /><Spacer /><ScrollButton><Tri dir="d" /></ScrollButton>
              </VScroll>
            </SheetMain>
            <SheetFoot>
              <FootTabs>
                <ScrollButton><Tri dir="l" /></ScrollButton><ScrollButton><Tri dir="r" /></ScrollButton>
                <ShapeTab $w={55} $h={15} $ml={-2} $pr={1}>
                  <svg width="55" height="15"><path d="M0 0l8 14h39l8-14z" fill="#fff" /><path d="M.5 0l8 14H47l7.500-14" fill="none" stroke="#000" /></svg>
                  <SheetTabText>Global</SheetTabText>
                </ShapeTab>
                <ShapeTab $w={62} $h={15} $ml={-7} $pr={3}>
                  <svg width="62" height="15"><path d="M4.500 .5H60L53 14H8.500L3 4z" fill={FACE} stroke="#000" /></svg>
                  <SheetTabText>Action1</SheetTabText>
                </ShapeTab>
                <FootFill />
              </FootTabs>
              <Splitter />
              <ScrollButton><Tri dir="l" /></ScrollButton><ScrollButton /><HTrack /><ScrollButton><Tri dir="r" /></ScrollButton>
              <Corner />
            </SheetFoot>
          </Sheet>
        </PanelInner>
      </PanelFrame>

      <DockTabs>
        <DockTab $w={61} $on $gap={1}><GridIcon /><Text size={11}>数据表</Text></DockTab>
        <DockTab $w={72}><TodoIcon /><Text size={11} color="#8a867e">应做事项</Text></DockTab>
        <Divider $ml={0} $h={15} $mt={3} />
        <DockTab $w={106}><ScreenIcon /><Text size={12} adv={6.1} fs={11.500} color="#8a867e">Active Screen</Text></DockTab>
        <Divider $ml={0} $h={15} $mt={3} />
      </DockTabs>
      <StatusBar>
        <StatusCell $w={1192} /><StatusCell $w={21} /><StatusCell $w={24} /><StatusCell $w={31} />
        <LangBar>
          <svg width="17" height="16" fill="none"><path d="M.5 6.500h16v8H.5z" fill="#d8d8d8" stroke="#888" /><path d="M2 8.500h13M2 10.500h13M4 12.500h9" stroke="#777" strokeDasharray="2 1" /><path d="M4 5c1-3 5 0 6-2s3-2 4-2" stroke="#888" strokeWidth="1.500" /></svg>
          <Divider $ml={4} $h={20} />
          <Slot $ml={6} $w={15}><HelpDot>?</HelpDot></Slot>
          <Divider $ml={6} $h={20} />
          <Slot $ml={5} $w={6}><svg width="6" height="12"><path d="M0 1h5v2H0zM0 9h5l-2.500 3z" /></svg></Slot>
        </LangBar>
      </StatusBar>
      <TaskBar>
        <StartButton><FlagIcon /><Text size={12}>开始</Text></StartButton>
        <Rail $ml={7} />
        <Slot $ml={7}><ServerIcon /></Slot><Slot $ml={7}><DesktopIcon /></Slot>
        <Rail $ml={56} />
        <TaskButton $ml={4}><FolderIcon /><Text>QTP汉化</Text></TaskButton>
        <TaskButton><DvdIcon /><Text>DVD 驱动器 (D:) QTP11</Text></TaskButton>
        <TaskButton><FolderIcon /><Text>bin</Text></TaskButton>
        <TaskButton $on><QtpIcon /><Text>QuickTest Professio...</Text></TaskButton>
        <Tray>
          <svg width="9" height="7" fill="none"><path d="M4 .5l-3 3 3 3M8 .5l-3 3 3 3" stroke="#000" strokeWidth="1.300" /></svg>
          <Slot $ml={11}><Svg><path d="M5 1h9v8H5z" fill="#1c66a8" stroke="#fff" /><path d="M1 5h9v8H1z" fill="#1c66a8" stroke="#fff" /><path d="M3 15h6M12 11h3" stroke="#333" /></Svg></Slot>
          <Svg><path d="M1 5h3l4-4v13L4 11H1z" fill="#ececf4" stroke="#7a7a90" /><circle cx="11.500" cy="11" r="4.300" fill="#d82c2c" /><path d="M9.500 9l4 4M13.500 9l-4 4" stroke="#fff" strokeWidth="1.500" /></Svg>
          <Slot $ml={4} $w={31}><Text adv={6.100}>19:33</Text></Slot>
        </Tray>
      </TaskBar>
    </Desktop>
  );
}
